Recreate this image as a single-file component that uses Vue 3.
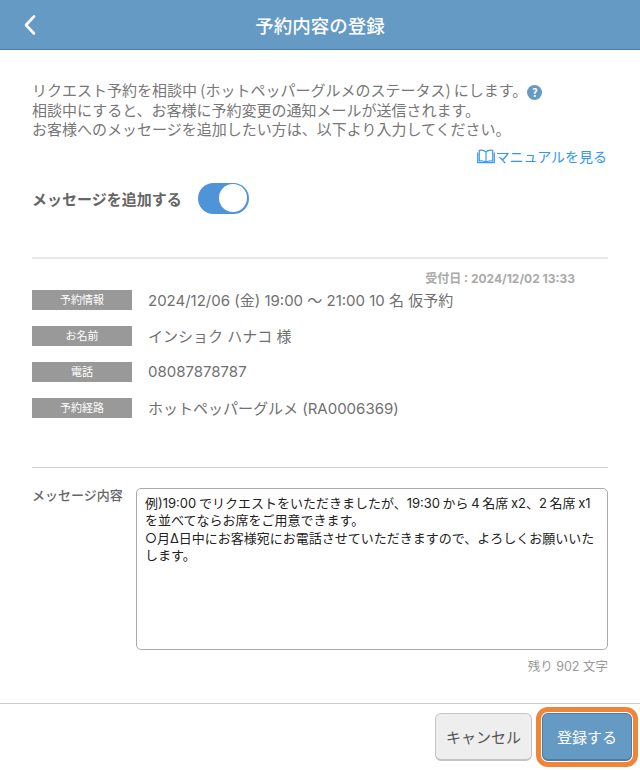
<script setup>
const rows = [
  { label: '予約情報', value: '2024/12/06 (金) 19:00 ～ 21:00 10 名 仮予約' },
  { label: 'お名前', value: 'インショク ハナコ 様' },
  { label: '電話', value: '08087878787' },
  { label: '予約経路', value: 'ホットペッパーグルメ (RA0006369)' },
]
const message = '例)19:00 でリクエストをいただきましたが、19:30 から 4 名席 x2、2 名席 x1 を並べてならお席をご用意できます。\n○月Δ日中にお客様宛にお電話させていただきますので、よろしくお願いいたします。'
</script>

<template>
  <div class="page">
    <header class="head">
      <svg class="back" width="14" height="22" viewBox="0 0 14 22"><path d="M11 2.5 L3 11 L11 19.5" fill="none" stroke="#fff" stroke-width="2.6" stroke-linecap="round" stroke-linejoin="round"/></svg>
      <h1>予約内容の登録</h1>
    </header>
    <main class="body">
      <p class="intro">リクエスト予約を相談中 (ホットペッパーグルメのステータス) にします。<span class="help">?</span><br>相談中にすると、お客様に予約変更の通知メールが送信されます。<br>お客様へのメッセージを追加したい方は、以下より入力してください。</p>
      <a class="manual">
        <svg width="18" height="15" viewBox="0 0 18 15"><path d="M9 3 C7.5 1.4 4.5 1 2.3 1.4 V12 C4.5 11.6 7.5 12 9 13.2 C10.500 12 13.500 11.6 15.700 12 V1.400 C13.500 1 10.500 1.400 9 3 Z M9 3 V13.200 M0.700 3.500 V13.700 H17.300 V3.500" fill="none" stroke="#3b9bf0" stroke-width="1.2"/></svg>マニュアルを見る
      </a>
      <div class="toggle-row">
        <span class="toggle-label">メッセージを追加する</span>
        <span class="toggle"><span class="knob"></span></span>
      </div>
      <section class="info">
        <div class="received">受付日 : 2024/12/02 13:33</div>
        <div v-for="r in rows" :key="r.label" class="row">
          <span class="tag">{{ r.label }}</span>
          <span class="val">{{ r.value }}</span>
        </div>
      </section>
      <section class="msg">
        <div class="msg-label">メッセージ内容</div>
        <div class="msg-main">
          <div class="area">{{ message }}</div>
          <div class="remain">残り 902 文字</div>
        </div>
      </section>
    </main>
    <footer class="foot">
      <button class="btn cancel">キャンセル</button>
      <button class="btn submit">登録する</button>
    </footer>
  </div>
</template>

<style scoped>
.page { width: 640px; height: 770px; display: flex; flex-direction: column; overflow: hidden; background: #fff; font-family: Inter, "Noto Sans CJK JP", sans-serif; color: #666; }
.head { position: relative; height: 49px; flex: none; background: #659ac5; border-bottom: 1px solid #4f7d9f; display: flex; align-items: center; justify-content: center; }
.back { position: absolute; left: 23px; top: 14px; }
.head h1 { margin: 0; color: #fff; font-size: 18.5px; font-weight: 500; }
.body { flex: 1; padding: 30px 32px 0; display: flex; flex-direction: column; min-height: 0; }
.intro { margin: 0; font-family: "Noto Sans CJK JP", sans-serif; font-size: 15px; line-height: 19.5px; color: #777; white-space: nowrap; }
.help { display: inline-block; width: 15px; height: 15px; margin: -3px 0; border-radius: 50%; background: #659ac5; color: #fff; font-size: 11px; font-weight: 700; line-height: 15px; text-align: center; vertical-align: -1px; }
.manual { display: flex; align-items: center; justify-content: flex-end; margin-top: 8px; font-size: 14px; line-height: 20px; color: #2f96f3; padding-right: 1px; }
.toggle-row { display: flex; align-items: center; margin-top: 16px; gap: 16px; }
.toggle-label { font-size: 15px; font-weight: 700; color: #666; }
.toggle { width: 51px; height: 31px; border-radius: 16px; background: #4f94d8; display: flex; justify-content: flex-end; align-items: center; padding-right: 1.5px; box-sizing: border-box; }
.knob { width: 28px; height: 28px; border-radius: 50%; background: #fff; }
.info { margin-top: 43px; border-top: 2px solid #e6e6e6; border-bottom: 1px solid #cfcfcf; height: 211px; box-sizing: border-box; padding-top: 13px; }
.received { text-align: right; padding-right: 33px; font-size: 12px; font-weight: 700; color: #aaa; line-height: 14px; margin-bottom: 4px; }
.row { display: flex; align-items: center; height: 20px; margin-bottom: 16px; gap: 16px; }
.tag { width: 100px; height: 20px; background: #999; color: #fff; font-size: 11px; line-height: 20px; text-align: center; flex: none; }
.val { font-size: 15px; color: #707070; padding-bottom: 1px; }
.msg { display: flex; margin-top: 20px; gap: 13px; }
.msg-label { width: 91px; flex: none; font-size: 13px; font-weight: 500; color: #666; white-space: nowrap; margin-top: -3px; }
.msg-main { flex: 1; }
.area { height: 162px; box-sizing: border-box; border: 1px solid #aaa; border-radius: 5px; padding: 6px 6px 6px 8px; font-size: 13px; line-height: 17.5px; color: #222; white-space: pre-wrap; word-spacing: -1px; }
.remain { text-align: right; font-size: 12.5px; color: #999; margin-top: 6px; }
.foot { flex: none; height: 67px; border-top: 1px solid #ccc; box-sizing: border-box; display: flex; justify-content: flex-end; align-items: flex-start; gap: 10px; padding: 9px 8px 0 0; }
.btn { height: 48px; border-radius: 6px; font-size: 15px; font-family: inherit; box-sizing: border-box; }
.cancel { width: 97px; background: #eee; border: 1px solid #c4c4c4; border-bottom-width: 2px; color: #555; padding: 0; }
.submit { width: 90px; background: #659ac5; border: 1px solid #4f7d9f; border-bottom-width: 2px; color: #fff; outline: 5px solid #f0853a; outline-offset: 1px; }
</style>
